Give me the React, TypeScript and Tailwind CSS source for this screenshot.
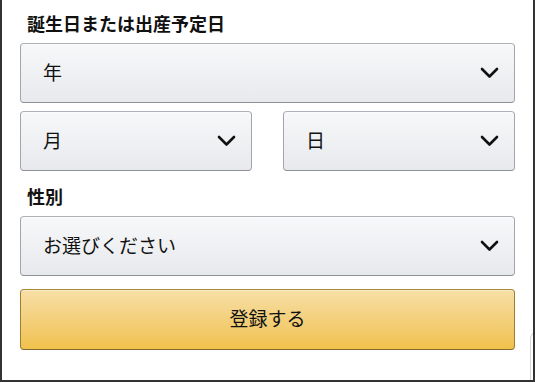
import React from "react";

const Chevron = () => (
  <svg width="19" height="12" viewBox="0 0 19 12" className="shrink-0">
    <path d="M2 2 L9.5 9.5 L17 2" fill="none" stroke="#111" strokeWidth="2.6" strokeLinecap="round" strokeLinejoin="round" />
  </svg>
);

const Select = ({ label, className = "" }: { label: string; className?: string }) => (
  <div
    className={
      "flex h-[60px] items-center justify-between rounded-[4px] border border-t-[#adb1b8] border-x-[#a2a6ac] border-b-[#8d9096] bg-gradient-to-b from-[#f7f8fa] to-[#e7e9ec] pl-[22px] pr-[15px] shadow-[inset_0_1px_0_rgba(255,255,255,0.6)] " +
      className
    }
  >
    <span className="pb-[3px] text-[19px] leading-none text-[#111]">{label}</span>
    <Chevron />
  </div>
);

export default function App() {
  return (
    <div
      className="relative h-[382px] w-[535px] overflow-hidden border-x-2 border-b-2 border-x-[#333] border-b-[#333] bg-white"
      style={{ fontFamily: '"Noto Sans CJK JP", "Noto Sans", sans-serif' }}
    >
      <div className="flex flex-col px-[18px] pt-[9px]">
        <div className="pl-[7px] text-[18px] font-bold leading-[28px] text-[#111]">誕生日または出産予定日</div>
        <div className="mt-[6px] flex flex-col gap-[8px]">
          <Select label="年" />
          <div className="grid grid-cols-2 gap-[31px]">
            <Select label="月" />
            <Select label="日" />
          </div>
        </div>
        <div className="mt-[11px] pl-[7px] text-[18px] font-bold leading-[28px] text-[#111]">性別</div>
        <div className="mt-[6px]">
          <Select label="お選びください" />
        </div>
        <div className="mt-[13px] flex h-[61px] items-center justify-center rounded-[4px] border border-t-[#a88734] border-x-[#9c7e31] border-b-[#846a29] bg-gradient-to-b from-[#f7dfa5] to-[#f0c14b] shadow-[inset_0_1px_0_rgba(255,255,255,0.4)]">
          <span className="pb-[4px] text-[19px] leading-none text-[#111]">登録する</span>
        </div>
      </div>
      <div className="absolute left-[528px] top-[331px] h-[80px] w-[30px] rounded-tl-[8px] border-l border-t border-[#d5d5d5]" />
    </div>
  );
}
